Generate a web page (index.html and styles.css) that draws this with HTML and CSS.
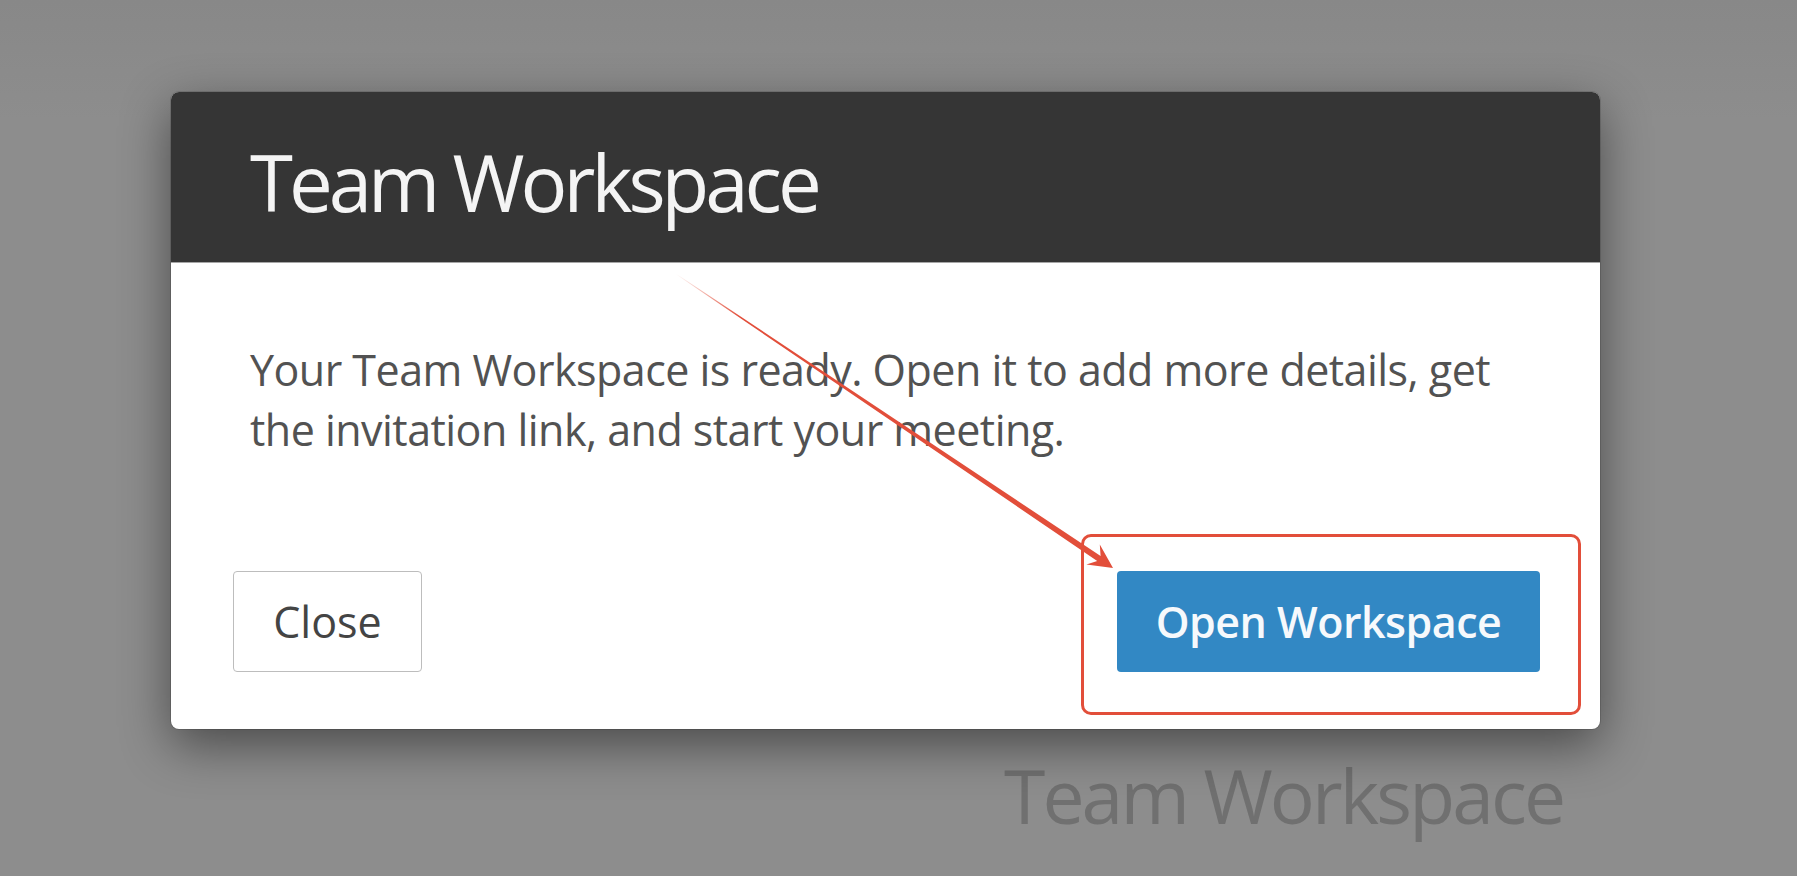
FILE: index.html
```html
<!DOCTYPE html>
<html lang="en">
<head>
<meta charset="utf-8">
<title>Team Workspace</title>
<link rel="stylesheet" href="styles.css">
</head>
<body>
<div class="page">
  <div class="dialog">
    <div class="dialog-header">
      <h1 class="dialog-title">Team Workspace</h1>
    </div>
    <div class="dialog-body">
      <p class="dialog-text">Your Team Workspace is ready. Open it to add more details, get the invitation link, and start your meeting.</p>
    </div>
    <div class="dialog-footer">
      <button class="btn btn-close">Close</button>
      <button class="btn btn-open">Open Workspace</button>
    </div>
  </div>
  <div class="bg-title">Team Workspace</div>

  <div class="highlight-box"></div>
  <svg class="annotation" width="1797" height="876" viewBox="0 0 1797 876" xmlns="http://www.w3.org/2000/svg">
    <defs>
      <linearGradient id="fade" gradientUnits="userSpaceOnUse" x1="676" y1="274" x2="740" y2="317">
        <stop offset="0" stop-color="#e24e3a" stop-opacity="0"/>
        <stop offset="1" stop-color="#e24e3a" stop-opacity="1"/>
      </linearGradient>
    </defs>
    <polygon fill="url(#fade)" points="675.8,274.3 1097.2,561.0 1086.4,564.6 1113,568 1099.8,544.6 1100.6,556.0 676.2,273.7"/>
  </svg>
</div>
</body>
</html>
```

FILE: styles.css
```css
html, body {
  margin: 0;
  padding: 0;
}
body {
  background: #8c8c8c;
  font-family: "Open Sans", "Noto Sans", "Liberation Sans", sans-serif;
  overflow: hidden;
}
.page {
  position: relative;
  width: 1797px;
  height: 876px;
  box-sizing: border-box;
  padding: 92px 0 0 171px;
  background: linear-gradient(#888888, #8d8d8d 120px, #8d8d8d);
}
.dialog {
  position: relative;
  z-index: 1;
  width: 1429px;
  height: 637px;
  box-sizing: border-box;
  background: #ffffff;
  border-radius: 8px;
  box-shadow: 0 16px 50px rgba(0, 0, 0, 0.48), 0 0 0 1px rgba(0, 0, 0, 0.12);
  display: flex;
  flex-direction: column;
  overflow: hidden;
}
.dialog-header {
  height: 171px;
  box-sizing: border-box;
  background: #353535;
  border-bottom: 1px solid #a6a6a6;
  padding: 51px 0 0 79px;
}
.dialog-title {
  margin: 0;
  font-size: 78px;
  line-height: 78px;
  font-weight: 400;
  color: #f4f4f4;
  letter-spacing: -4px;
}
.dialog-body {
  padding: 77px 79px 0 79px;
}
.dialog-text {
  margin: 0;
  font-size: 43px;
  line-height: 60px;
  color: #525252;
  letter-spacing: -0.53px;
}
.dialog-footer {
  margin-top: auto;
  display: flex;
  justify-content: space-between;
  align-items: flex-end;
  padding: 0 60px 57px 62px;
}
.btn {
  font-family: inherit;
  font-size: 43px;
  height: 101px;
  border-radius: 4px;
  cursor: pointer;
}
.btn-close {
  width: 189px;
  background: #ffffff;
  border: 1px solid #bdbdbd;
  color: #444444;
}
.btn-open {
  width: 423px;
  background: #3288c4;
  border: none;
  color: #f6f9fc;
  font-weight: 600;
  letter-spacing: -0.5px;
}
.bg-title {
  margin: 29px 0 0 833px;
  font-size: 75px;
  line-height: 75px;
  color: #707070;
  letter-spacing: -2.9px;
}
.highlight-box {
  position: absolute;
  z-index: 2;
  left: 1081px;
  top: 534px;
  width: 500px;
  height: 181px;
  box-sizing: border-box;
  border: 3px solid #e24e3a;
  border-radius: 10px;
}
.annotation {
  position: absolute;
  z-index: 3;
  left: 0;
  top: 0;
  pointer-events: none;
}
```
